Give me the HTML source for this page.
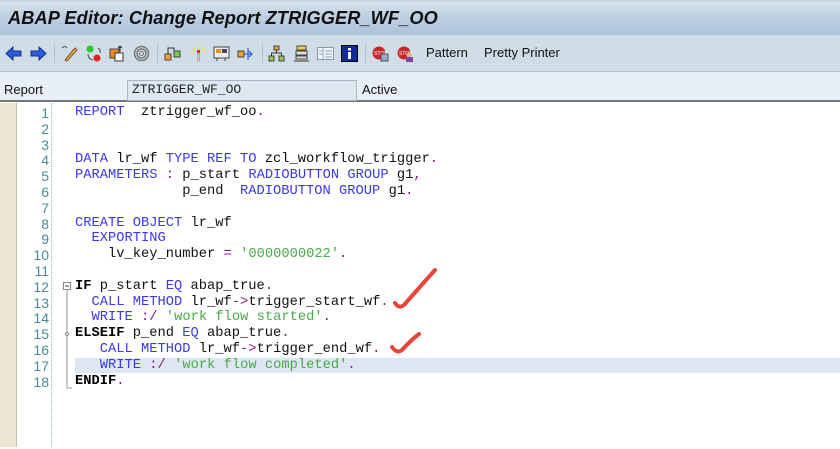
<!DOCTYPE html>
<html><head><meta charset="utf-8"><style>
*{margin:0;padding:0;box-sizing:border-box}
body{width:840px;height:447px;overflow:hidden;background:#fff;font-family:"Liberation Sans",sans-serif;position:relative}
#title{position:absolute;left:0;top:0;width:840px;height:35px;background:linear-gradient(#d6e2ee,#c0d1e2 40%,#adc3da);border-top:2px solid #c8d4e0}
#title span{position:absolute;left:8px;top:6px;font-size:18.2px;font-weight:bold;font-style:italic;color:#111;letter-spacing:0.1px}
#tb{position:absolute;left:0;top:35px;width:840px;height:37px;background:#d0dde7;border-bottom:1px solid #b3c3d1}
#rep{position:absolute;left:0;top:72px;width:840px;height:30px;background:#e8eff7;border-bottom:2px solid #777}
.ic{position:absolute;top:10px;width:17px;height:17px}
.sep{position:absolute;top:9px;width:1px;height:19px;background:#b0c0cf}
#ed{position:absolute;left:0;top:103px;width:840px;height:344px}
#gut{position:absolute;left:0;top:0;width:17px;height:344px;background:#ede6d2;border-right:1px solid #c9c2ae}
#dots{position:absolute;left:51px;top:0;height:344px;border-left:1px dotted #8cc4cc}
.ln{position:absolute;left:16px;width:33px;text-align:right;font-family:"Liberation Sans",sans-serif;font-size:14px;color:#4a8c98;height:16px;line-height:16px}
.cd{position:absolute;left:75px;font-family:"Liberation Mono",monospace;font-size:13.75px;white-space:pre;color:#111;height:16px;line-height:16px}
.k{color:#3a3ae6}.s{color:#4aa84a}.p{color:#8a1a8a}.b{font-weight:bold;color:#000}
#lines{position:absolute;left:0;top:2px;width:840px;height:340px}
</style></head><body>
<div id="title"><span>ABAP Editor: Change Report ZTRIGGER_WF_OO</span></div>
<div id="tb">
<svg class="ic" style="left:5px" viewBox="0 0 17 17"><path d="M1 8.5 L8 2 V6 H16 V11 H8 V15 Z" fill="#2a5fd8" stroke="#12328a"/></svg>
<svg class="ic" style="left:30px" viewBox="0 0 17 17"><path d="M16 8.5 L9 2 V6 H1 V11 H9 V15 Z" fill="#2a5fd8" stroke="#12328a"/></svg>
<div class="sep" style="left:54px"></div>
<svg class="ic" style="left:61px" viewBox="0 0 17 17"><path d="M4 15 L14 3 L16 5 L6 16 Z" fill="#f0b050" stroke="#7a5020"/><path d="M1 3 q3 -3 5 0" stroke="#555" fill="none"/></svg>
<svg class="ic" style="left:85px" viewBox="0 0 17 17"><circle cx="5" cy="4" r="3.5" fill="#2c2"/><circle cx="12" cy="13" r="3.5" fill="#d22"/><path d="M3 9 q0 5 5 6 M13 3 q3 2 2 5" stroke="#444" fill="none"/></svg>
<svg class="ic" style="left:109px" viewBox="0 0 17 17"><rect x="1" y="4" width="9" height="9" fill="#f08a20" stroke="#444"/><rect x="6" y="8" width="8" height="8" fill="#fff" stroke="#333"/><path d="M11 1 v6 M9 3 l2-2 2 2" stroke="#333" fill="none"/></svg>
<svg class="ic" style="left:133px" viewBox="0 0 17 17"><circle cx="8.5" cy="8.5" r="7" fill="none" stroke="#777" stroke-width="1.5"/><circle cx="8.5" cy="8.5" r="4.5" fill="none" stroke="#777" stroke-width="1.5"/><circle cx="8.5" cy="8.5" r="2" fill="none" stroke="#777"/></svg>
<div class="sep" style="left:157px"></div>
<svg class="ic" style="left:164px" viewBox="0 0 17 17"><rect x="1" y="9" width="6" height="6" fill="#f0a030" stroke="#444"/><rect x="10" y="6" width="6" height="6" fill="#7c4" stroke="#444"/><path d="M4 9 V3 H10 V6" stroke="#333" fill="none"/></svg>
<svg class="ic" style="left:190px" viewBox="0 0 17 17"><path d="M8.5 1 v3 M3 3 l2 2 M14 3 l-2 2 M1 7 h3 M13 7 h3" stroke="#ee0"/><rect x="7" y="5" width="3" height="3" fill="#e22"/><rect x="7.5" y="8" width="2" height="8" fill="#ccc" stroke="#888" stroke-width=".5"/></svg>
<svg class="ic" style="left:213px" viewBox="0 0 17 17"><rect x="1" y="2" width="15" height="11" fill="#eee" stroke="#444"/><rect x="3" y="4" width="5" height="4" fill="#f08a20"/><rect x="9" y="4" width="5" height="4" fill="#446"/><path d="M4 13v3M12 13v3" stroke="#444"/></svg>
<svg class="ic" style="left:237px" viewBox="0 0 17 17"><rect x="1" y="6" width="6" height="6" fill="#f0a030" stroke="#444"/><path d="M7 9 H15 M12 6 l3 3 -3 3 M11 3 V15" stroke="#3a6ad0" fill="none" stroke-width="1.3"/></svg>
<div class="sep" style="left:262px"></div>
<svg class="ic" style="left:268px" viewBox="0 0 17 17"><rect x="6" y="1" width="5" height="4" fill="#f0a030" stroke="#444"/><rect x="1" y="11" width="5" height="5" fill="#9c4" stroke="#444"/><rect x="11" y="11" width="5" height="5" fill="#9c4" stroke="#444"/><path d="M8.5 5 V8 H3.5 V11 M8.5 8 H13.5 V11" stroke="#333" fill="none"/></svg>
<svg class="ic" style="left:293px" viewBox="0 0 17 17"><rect x="4" y="1" width="9" height="4" fill="#f0d040" stroke="#444"/><rect x="3" y="6" width="11" height="4" fill="#ddd" stroke="#444"/><rect x="3" y="11" width="11" height="3" fill="#ddd" stroke="#444"/><path d="M1 16 H16" stroke="#333"/></svg>
<svg class="ic" style="left:317px" viewBox="0 0 17 17"><rect x="0.5" y="2.5" width="16" height="12" fill="#f4f6fa" stroke="#8a9ab0"/><path d="M6 3 V14 M8 6 H15 M8 9 H15 M8 12 H15 M2 6 H5 M2 9 H5" stroke="#8aa0c0"/></svg>
<svg class="ic" style="left:341px" viewBox="0 0 17 17"><rect x="0.5" y="0.5" width="16" height="16" fill="#102a9a" stroke="#000"/><rect x="7" y="3" width="3" height="2.5" fill="#fff"/><rect x="7" y="7" width="3" height="7" fill="#fff"/></svg>
<div class="sep" style="left:365px"></div>
<svg class="ic" style="left:372px" viewBox="0 0 17 17"><circle cx="7" cy="8" r="6.5" fill="#c82828"/><text x="2" y="10" font-size="5" fill="#fff" font-family="Liberation Sans">STOP</text><rect x="9" y="9" width="7" height="7" fill="#9ac" stroke="#456"/></svg>
<svg class="ic" style="left:397px" viewBox="0 0 17 17"><circle cx="7" cy="8" r="6.5" fill="#c82828"/><text x="2" y="10" font-size="5" fill="#fff" font-family="Liberation Sans">STOP</text><circle cx="12" cy="10" r="2.5" fill="#e8b080"/><rect x="9" y="12" width="7" height="5" fill="#7a4a9a"/></svg>
<span style="position:absolute;left:426px;top:10px;font-size:13px;color:#111">Pattern</span>
<span style="position:absolute;left:484px;top:10px;font-size:13px;color:#111">Pretty Printer</span>
</div>
<div id="rep">
<span style="position:absolute;left:4px;top:10px;font-size:13px;color:#111">Report</span>
<div style="position:absolute;left:127px;top:8px;width:230px;height:21px;background:#dfe7f0;border:1px solid #a8b6c4"><span style="position:absolute;left:4px;top:1px;font-family:'Liberation Mono',monospace;font-size:13px;color:#222">ZTRIGGER_WF_OO</span></div>
<span style="position:absolute;left:362px;top:10px;font-size:13px;color:#111">Active</span>
</div>
<div id="ed">
<div id="gut"></div>
<div id="dots"></div>
<div id="lines">
<div style="position:absolute;left:75px;top:253px;width:765px;height:15px;background:#dde6f2"></div>
<div class="ln" style="top:0px">1</div><div class="ln" style="top:15.8px">2</div><div class="ln" style="top:31.6px">3</div><div class="ln" style="top:47.4px">4</div><div class="ln" style="top:63.2px">5</div><div class="ln" style="top:79px">6</div><div class="ln" style="top:94.8px">7</div><div class="ln" style="top:110.6px">8</div><div class="ln" style="top:126.4px">9</div><div class="ln" style="top:142.2px">10</div><div class="ln" style="top:158px">11</div><div class="ln" style="top:173.8px">12</div><div class="ln" style="top:189.6px">13</div><div class="ln" style="top:205.4px">14</div><div class="ln" style="top:221.2px">15</div><div class="ln" style="top:237px">16</div><div class="ln" style="top:252.8px">17</div><div class="ln" style="top:268.6px">18</div>
<div class="cd" style="top:0px"><span class="k">REPORT</span>  ztrigger_wf_oo<span class="p">.</span></div>
<div class="cd" style="top:47.4px"><span class="k">DATA</span> lr_wf <span class="k">TYPE REF TO</span> zcl_workflow_trigger<span class="p">.</span></div>
<div class="cd" style="top:63.2px"><span class="k">PARAMETERS</span> <span class="p">:</span> p_start <span class="k">RADIOBUTTON GROUP</span> g1<span class="p">,</span></div>
<div class="cd" style="top:79px">             p_end  <span class="k">RADIOBUTTON GROUP</span> g1<span class="p">.</span></div>
<div class="cd" style="top:110.6px"><span class="k">CREATE OBJECT</span> lr_wf</div>
<div class="cd" style="top:126.4px">  <span class="k">EXPORTING</span></div>
<div class="cd" style="top:142.2px">    lv_key_number <span class="p">=</span> <span class="s">'0000000022'</span><span class="p">.</span></div>
<div class="cd" style="top:173.8px"><span class="b">IF</span> p_start <span class="k">EQ</span> abap_true<span class="p">.</span></div>
<div class="cd" style="top:189.6px">  <span class="k">CALL METHOD</span> lr_wf<span class="p">-&gt;</span>trigger_start_wf<span class="p">.</span></div>
<div class="cd" style="top:205.4px">  <span class="k">WRITE</span> <span class="p">:/</span> <span class="s">'work flow started'</span><span class="p">.</span></div>
<div class="cd" style="top:221.2px"><span class="b">ELSEIF</span> p_end <span class="k">EQ</span> abap_true<span class="p">.</span></div>
<div class="cd" style="top:237px">   <span class="k">CALL METHOD</span> lr_wf<span class="p">-&gt;</span>trigger_end_wf<span class="p">.</span></div>
<div class="cd" style="top:252.8px">   <span class="k">WRITE</span> <span class="p">:/</span> <span class="s">'work flow completed'</span><span class="p">.</span></div>
<div class="cd" style="top:268.6px"><span class="b">ENDIF</span><span class="p">.</span></div>
<svg style="position:absolute;left:0;top:0" width="840" height="344">
<rect x="63.5" y="177.5" width="7" height="7" fill="#fff" stroke="#888"/><path d="M65 181 H69" stroke="#444"/>
<path d="M67 185 V283 H72" stroke="#999" fill="none"/><circle cx="67" cy="229" r="1.5" fill="#fff" stroke="#888"/>
<path d="M395 198 Q399 204 404 200 Q418 184 435 165" stroke="#e8453a" stroke-width="4" fill="none" stroke-linecap="round"/>
<path d="M392 242 Q397 249 402 245 Q410 236 419 229" stroke="#e8453a" stroke-width="4" fill="none" stroke-linecap="round"/>
</svg>
</div>
</div>
</body></html>
